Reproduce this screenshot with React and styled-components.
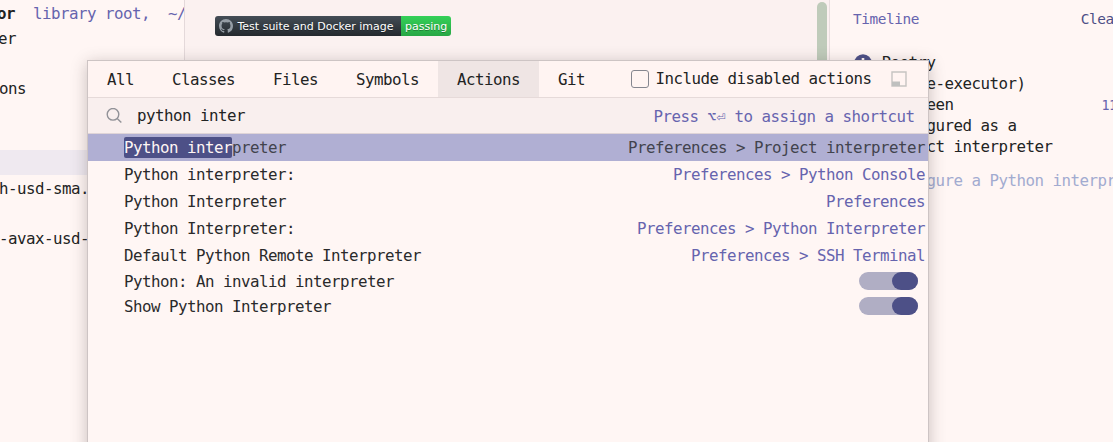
import React from "react";
import styled, { createGlobalStyle } from "styled-components";

const Global = createGlobalStyle`
  * { box-sizing: border-box; }
  html, body { margin: 0; padding: 0; overflow: hidden; background: #fff6f4; }
`;

const Workspace = styled.div`
  position: relative;
  display: flex;
  width: 1113px;
  height: 442px;
  overflow: hidden;
  background: #fff6f4;
  color: #222323;
  font-family: "DejaVu Sans Mono", monospace;
  font-size: 15.8px;
  letter-spacing: -0.512px;
  white-space: pre;
`;

const ProjectTree = styled.aside`
  flex: 0 0 185px;
  overflow: hidden;
  border-right: 1px solid #e4d9da;
`;

const TreeRow = styled.div`
  height: 25px;
  line-height: 27px;
  background: ${(p) => (p.$selected ? "#efe9f0" : "transparent")};
  text-indent: ${(p) => p.$shift || 0}px;

  span { color: #6664ae; }
`;

const Editor = styled.main`
  display: flex;
  justify-content: space-between;
  flex: 0 0 644px;
  padding: 0 2px 0 30px;
  background: #fbf1f0;
`;

const Badge = styled.div`
  display: flex;
  width: 236px;
  height: 20px;
  margin-top: 16px;
  border-radius: 3px;
  overflow: hidden;
  color: #fff;
  font: 11px/21px "DejaVu Sans", sans-serif;
  letter-spacing: 0;
  text-shadow: 0 1px 0 rgba(1, 1, 1, 0.3);
`;

const BadgeLabel = styled.div`
  display: flex;
  align-items: center;
  gap: 4.5px;
  width: 186px;
  padding-left: 4px;
  background: linear-gradient(#444d56, #24292e);

  span { padding-top: 1px; }
`;

const BadgeStatus = styled.div`
  flex: 1;
  padding-left: 4px;
  background: linear-gradient(#34d058, #28a745);
`;

const ScrollThumb = styled.div`
  width: 10px;
  height: 120px;
  margin-top: 2px;
  border-radius: 5px;
  background: #bfcbba;
`;

const Notifications = styled.aside`
  flex: 1;
  min-width: 0;
  overflow: hidden;
  border-left: 1px solid #e9dedf;
  padding: 9px 0 0 23px;
`;

const NotificationHeader = styled.div`
  display: flex;
  justify-content: space-between;
  width: 269px;
  height: 20px;
  line-height: 21px;
  font-size: 14.4px;
  letter-spacing: -0.42px;
  color: #6664ae;

  b { font-weight: 400; color: #4d4f86; }
`;

const Notice = styled.div`
  display: grid;
  grid-template-columns: 28.5px 220px 1fr;
  padding-top: 23px;
  line-height: 21px;

  svg { margin: 2px 0 0 1px; }
`;

const NoticeTime = styled.div`
  padding-top: 43px;
  font-size: 13.4px;
  color: #6664ae;
`;

const NoticeAction = styled.div`
  margin-top: 13px;
  color: #a2abd0;
`;

const Popup = styled.section`
  position: absolute;
  left: 87px;
  top: 60px;
  width: 842px;
  height: 420px;
  border: 1px solid #cdc4c4;
  background: #fff6f4;
  box-shadow: 0 3px 15px rgba(60, 45, 48, 0.28);
`;

const TabBar = styled.div`
  display: flex;
  align-items: center;
  height: 37px;
  border-bottom: 1px solid #e6dad9;
  background: #fff4f2;

  > svg { margin-left: 20px; }
`;

const Tab = styled.div`
  height: 36px;
  padding: 0 19px;
  line-height: 38px;
  background: ${(p) => (p.$active ? "#efe5e4" : "transparent")};
`;

const Checkbox = styled.span`
  width: 18px;
  height: 18px;
  margin: 0 7px 1px 26.5px;
  border: 1px solid #85868f;
  border-radius: 3px;
`;

const CheckboxLabel = styled.span`
  line-height: 38px;
`;

const SearchRow = styled.div`
  display: flex;
  align-items: center;
  height: 36px;
  padding: 0 13.5px 0 18px;
  border-bottom: 1px solid #dfd4d7;
  background: #f9efee;
`;

const Query = styled.span`
  flex: 1;
  margin-left: 15px;
`;

const Hint = styled.span`
  padding-top: 2px;
  line-height: 20px;
  color: #6664ae;
`;

const Key = styled.span`
  display: inline-block;
  width: 9px;
  font-size: 15px;
  line-height: 18px;
  letter-spacing: 0;
`;

const Result = styled.div`
  display: flex;
  align-items: center;
  justify-content: space-between;
  height: ${(p) => (p.$option ? 25 : 27)}px;
  line-height: 21px;
  padding: 0 ${(p) => (p.$option ? 10 : 3)}px 0 36px;
  background: ${(p) => (p.$selected ? "#b0afd3" : "transparent")};
  color: ${(p) => (p.$selected ? "#42434d" : "#2a2a2b")};
`;

const Path = styled.span`
  color: ${(p) => (p.$selected ? "#42434d" : "#6664ae")};
`;

const Match = styled.span`
  padding: 1px 0;
  border-radius: 2px;
  background: #4d5087;
  color: #fff6f4;
`;

const Toggle = styled.span`
  display: flex;
  justify-content: flex-end;
  width: 59px;
  height: 18px;
  margin-bottom: 1px;
  border-radius: 9px;
  background: #b0aec4;

  &::after {
    content: "";
    width: 26px;
    border-radius: 9px;
    background: #4d5087;
  }
`;

const tree = [
  { text: "er", shift: -2 },
  { text: "" },
  { text: "ons", shift: -1 },
  { text: "" },
  { text: "" },
  { text: "", selected: true },
  { text: "h-usd-sma.py", shift: -1 },
  { text: "" },
  { text: "-avax-usd-sma", shift: -1 },
];

const tabs = ["All", "Classes", "Files", "Symbols", "Actions", "Git"];

const results = [
  ["Python interpreter:", "Preferences > Python Console"],
  ["Python Interpreter", "Preferences"],
  ["Python Interpreter:", "Preferences > Python Interpreter"],
  ["Default Python Remote Interpreter", "Preferences > SSH Terminal"],
];

const options = ["Python: An invalid interpreter", "Show Python Interpreter"];

const GitHubMark = () => (
  <svg width="14" height="14" viewBox="0 0 16 16" fill="#959da5">
    <path d="M8 0C3.58 0 0 3.58 0 8c0 3.54 2.29 6.53 5.47 7.59.4.07.55-.17.55-.38 0-.19-.01-.82-.01-1.49-2.01.37-2.53-.49-2.69-.94-.09-.23-.48-.94-.82-1.13-.28-.15-.68-.52-.01-.53.63-.01 1.08.58 1.23.82.72 1.21 1.87.87 2.33.66.07-.52.28-.87.51-1.07-1.78-.2-3.64-.89-3.64-3.95 0-.87.31-1.59.82-2.15-.08-.2-.36-1.02.08-2.12 0 0 .67-.21 2.2.82a7.4 7.4 0 0 1 4 0c1.53-1.04 2.2-.82 2.2-.82.44 1.1.16 1.92.08 2.12.51.56.82 1.27.82 2.15 0 3.07-1.87 3.75-3.65 3.95.29.25.54.73.54 1.48 0 1.07-.01 1.93-.01 2.2 0 .21.15.46.55.38A8 8 0 0 0 16 8c0-4.42-3.58-8-8-8Z" />
  </svg>
);

const SearchIcon = () => (
  <svg width="16" height="16" viewBox="0 0 16 16" fill="none" stroke="#929298" strokeWidth="1.4">
    <circle cx="7" cy="6.3" r="5.8" />
    <path d="M11.2 10.5 15.3 14.6" />
  </svg>
);

const InfoIcon = () => (
  <svg width="18" height="18" viewBox="0 0 18 18">
    <circle cx="9" cy="9" r="8.8" fill="#4d5087" />
    <path d="M7.7 4h2.6v2.5H7.7zM7.7 8h2.6v6H7.7z" fill="#fff6f4" />
  </svg>
);

const ToolWindowIcon = () => (
  <svg width="16" height="16" viewBox="0 0 16 16">
    <path d="M1 1h14v14H1z" fill="none" stroke="#c6c3c2" strokeWidth="1.4" />
    <path d="M1 10.5h8V15H1z" fill="#bfc0bf" />
  </svg>
);

export default function App() {
  return (
    <Workspace>
      <Global />
      <ProjectTree>
        <TreeRow $shift={-3}>
          <b>or</b>
          <span>{"  library root,  ~/"}</span>
        </TreeRow>
        {tree.map((row, i) => (
          <TreeRow key={i} $selected={row.selected} $shift={row.shift}>
            {row.text}
          </TreeRow>
        ))}
      </ProjectTree>

      <Editor>
        <Badge>
          <BadgeLabel>
            <GitHubMark />
            <span>Test suite and Docker image</span>
          </BadgeLabel>
          <BadgeStatus>passing</BadgeStatus>
        </Badge>
        <ScrollThumb />
      </Editor>

      <Notifications>
        <NotificationHeader>
          <span>Timeline</span>
          <b>Clear</b>
        </NotificationHeader>
        <Notice>
          <InfoIcon />
          <div>
            {"Poetry\n(trade-executor)\nhas been\nconfigured as a\nproject interpreter"}
            <NoticeAction>Configure a Python interpreter</NoticeAction>
          </div>
          <NoticeTime>11:20</NoticeTime>
        </Notice>
      </Notifications>

      <Popup>
        <TabBar>
          {tabs.map((name) => (
            <Tab key={name} $active={name === "Actions"}>
              {name}
            </Tab>
          ))}
          <Checkbox />
          <CheckboxLabel>Include disabled actions</CheckboxLabel>
          <ToolWindowIcon />
        </TabBar>
        <SearchRow>
          <SearchIcon />
          <Query>python inter</Query>
          <Hint>
            Press <Key>⌥</Key>
            <Key>⏎</Key> to assign a shortcut
          </Hint>
        </SearchRow>
        <Result $selected>
          <span>
            <Match>Python inter</Match>preter
          </span>
          <Path $selected>{"Preferences > Project interpreter"}</Path>
        </Result>
        {results.map(([name, path]) => (
          <Result key={name}>
            <span>{name}</span>
            <Path>{path}</Path>
          </Result>
        ))}
        {options.map((name) => (
          <Result key={name} $option>
            <span>{name}</span>
            <Toggle />
          </Result>
        ))}
      </Popup>
    </Workspace>
  );
}
